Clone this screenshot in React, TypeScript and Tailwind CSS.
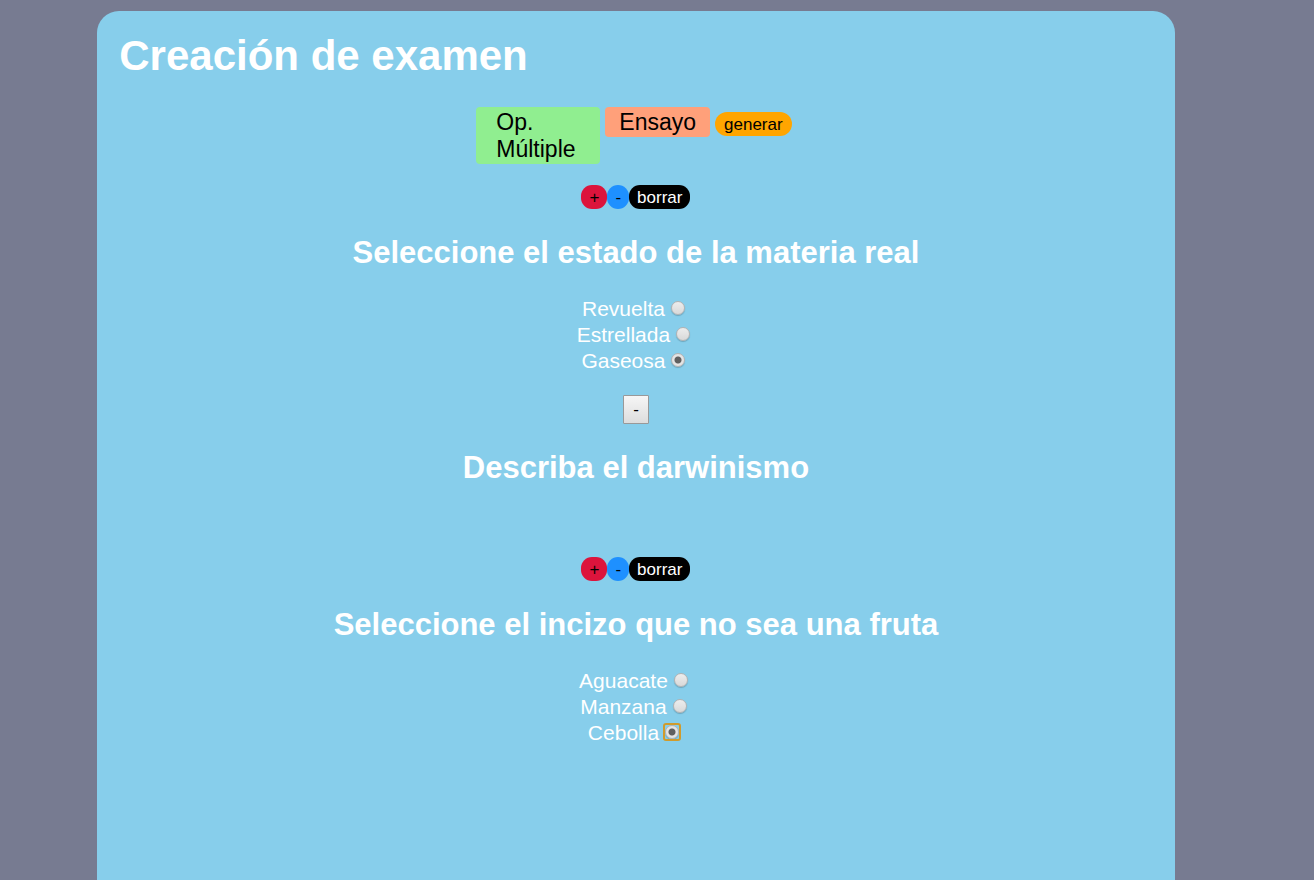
import { useState } from "react";

type Choice = {
  id: string;
  title: string;
  options: string[];
};

const states: Choice = {
  id: "materia",
  title: "Seleccione el estado de la materia real",
  options: ["Revuelta", "Estrellada", "Gaseosa"],
};

const fruits: Choice = {
  id: "fruta",
  title: "Seleccione el incizo que no sea una fruta",
  options: ["Aguacate", "Manzana", "Cebolla"],
};

function ChoiceQuestion({ question, focused }: { question: Choice; focused?: string }) {
  const [selected, setSelected] = useState(question.options[2]);
  return (
    <section className="flex flex-col items-center">
      <div className="flex text-[17px] leading-[22px]">
        <button type="button" aria-label="Agregar opción" className="rounded-[11px] bg-[#dc143c] px-2 pt-[2px] text-black">
          +
        </button>
        <button type="button" aria-label="Quitar opción" className="rounded-[11px] bg-[#1e90ff] px-2 pt-[2px] text-black">
          -
        </button>
        <button type="button" className="rounded-[11px] bg-black px-2 pt-[2px] text-white">
          borrar
        </button>
      </div>
      <h2 className="mt-[26px] text-center text-[31px] leading-9 font-bold">{question.title}</h2>
      <div role="radiogroup" aria-label={question.title} className="mt-[25px] flex flex-col items-center">
        {question.options.map((option) => (
          <label key={option} className="flex h-[26px] items-center gap-[6px] pr-[5px] text-[21px] leading-[26px]">
            {option}
            <span
              className={
                "mb-[2px] flex rounded-[1px] " +
                (option === focused ? "outline-2 outline-offset-0 outline-[#d09b2c]" : "")
              }
            >
              <input
                type="radio"
                name={question.id}
                value={option}
                checked={selected === option}
                onChange={() => setSelected(option)}
                className="size-[14px] appearance-none rounded-full border border-[#b3b3b3] bg-linear-to-b from-[#ededed] to-[#d9d9d9] shadow-[0_1px_1px_rgba(0,0,0,0.2)] checked:bg-[radial-gradient(circle,#606060_3px,#e4e4e4_4px)]"
              />
            </span>
          </label>
        ))}
      </div>
    </section>
  );
}

export default function App() {
  return (
    <div className="flex min-h-screen bg-[#777b91] pt-[11px] font-['Liberation_Sans',Arial,sans-serif] text-white">
      <main className="ml-[7.4%] w-[82%] rounded-t-[22px] bg-[#87ceeb] px-[22px] pt-[21px]">
        <h1 className="text-[42px] leading-[48px] font-bold">Creación de examen</h1>
        <div className="mt-[27px] flex items-start justify-center gap-[5px] pr-1 text-black">
          <button type="button" className="w-[124px] rounded-[4px] bg-[#90ee90] px-5 pt-[2px] pb-px text-left text-[23px] leading-[27px]">
            Op. Múltiple
          </button>
          <button type="button" className="rounded-[4px] bg-[#ffa07a] px-[14px] pt-[2px] pb-px text-[23px] leading-[27px]">
            Ensayo
          </button>
          <button type="button" className="mt-[5px] rounded-[12px] bg-[#ffa500] px-[9px] pt-[2px] text-[17px] leading-[22px]">
            generar
          </button>
        </div>
        <div className="mt-[21px]">
          <ChoiceQuestion question={states} />
        </div>
        <section className="mt-[21px] flex flex-col items-center">
          <button type="button" aria-label="Quitar pregunta" className="h-[29px] w-[26px] rounded-[1px] border border-[#999999] bg-linear-to-b from-[#f6f6f6] to-[#dddddd] text-[17px] leading-6 text-black">
            -
          </button>
          <h2 className="mt-[26px] text-center text-[31px] leading-9 font-bold">Describa el darwinismo</h2>
        </section>
        <div className="mt-[71px]">
          <ChoiceQuestion question={fruits} focused="Cebolla" />
        </div>
      </main>
    </div>
  );
}
